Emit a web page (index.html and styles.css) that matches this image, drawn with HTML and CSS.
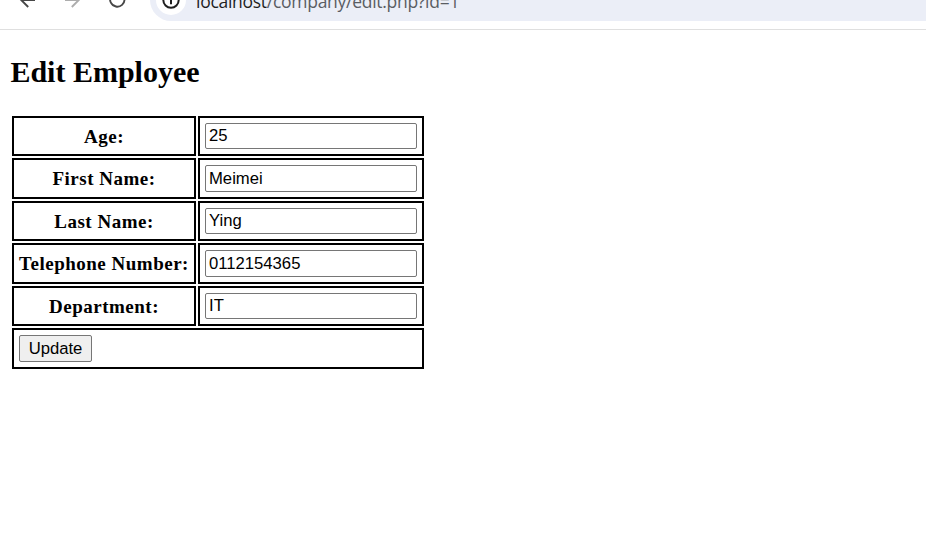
FILE: index.html
```
<!DOCTYPE html>
<html lang="en">
<head>
<meta charset="utf-8">
<title>Edit Employee</title>
<link rel="stylesheet" href="styles.css">
</head>
<body>
<header class="toolbar">
  <svg class="nav" width="150" height="42" viewBox="0 -21 150 42" fill="none" stroke="#474747" stroke-width="1.9">
    <path d="M35 0H21M28.200-7L21.200 0l7 7"/>
    <path d="M65 0h14M71.800-7l7 7-7 7" stroke="#adadad"/>
    <path d="M124.500-1A7.200 7.200 0 1 1 122-6"/>
  </svg>
  <div class="address">
    <span class="site">
      <svg width="30" height="30" viewBox="-15 -15 30 30" fill="none" stroke="#1f1f1f" stroke-width="2">
        <circle r="7.700"/><path d="M0-1v5.200M0-4.500v2"/>
      </svg>
    </span>
    <span class="url"><b>localhost</b>/company/edit.php?id=1</span>
  </div>
</header>
<main>
  <h2>Edit Employee</h2>
  <form class="employee">
    <label class="cell" for="age">Age:</label><div class="cell field"><input id="age" value="25"></div>
    <label class="cell" for="first">First Name:</label><div class="cell field"><input id="first" value="Meimei"></div>
    <label class="cell" for="last">Last Name:</label><div class="cell field"><input id="last" value="Ying"></div>
    <label class="cell" for="phone">Telephone Number:</label><div class="cell field"><input id="phone" value="0112154365"></div>
    <label class="cell" for="dept">Department:</label><div class="cell field"><input id="dept" value="IT"></div>
    <div class="cell field actions"><button type="button">Update</button></div>
  </form>
</main>
</body>
</html>
```
FILE: styles.css
```
* { box-sizing: border-box; }
body { margin: 0; height: 535px; overflow: hidden; background: #fff; color: #000; font-family: "Liberation Serif", "Times New Roman", serif; }
.toolbar { display: flex; height: 51px; margin-top: -21px; border-bottom: 1px solid #dfdfdf; }
.nav { flex: none; }
.address { flex: 1; display: flex; align-items: center; height: 42px; padding-left: 6px; background: #ebeef7; border-radius: 21px 0 0 21px; }
.site { width: 30px; height: 30px; border-radius: 50%; background: #fff; }
.site svg { display: block; }
.url { margin-left: 10px; padding-top: 2px; font: 17.5px/24px "Open Sans", "Noto Sans", sans-serif; letter-spacing: -0.28px; color: #5a5d63; white-space: nowrap; }
.url b { font-weight: 400; color: #1f1f1f; }
h2 { margin: 0; padding: 25px 0 0 10.400px; font-size: 30px; line-height: 34px; }
.employee { display: grid; grid-template-columns: 184px 226px; grid-template-rows: 40px 41px 40px 41px 40px 41px; gap: 2px; margin: 27px 0 0 12px; }
.cell { border: 2px solid #000; }
label { display: flex; align-items: center; justify-content: center; padding-top: 1px; font-size: 19px; letter-spacing: 0.5px; font-weight: 700; white-space: nowrap; }
.field { display: flex; padding: 5px; }
.actions { grid-column: 1 / 3; }
input { width: 100%; height: 100%; margin: 0; padding: 0 3px; border: 1px solid #767676; border-radius: 2px; outline: 0; background: #fff; color: #000; font: 16.667px "Liberation Sans", Arial, sans-serif; }
button { width: 73px; margin: 0; padding: 0; border: 1px solid #767676; border-radius: 2px; background: #efefef; color: #000; font: 16.667px "Liberation Sans", Arial, sans-serif; }
```
